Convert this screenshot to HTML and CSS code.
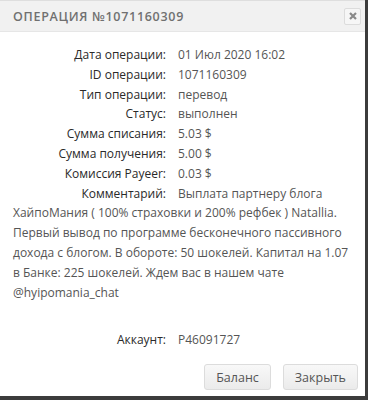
FILE: index.html
```html
<!DOCTYPE html>
<html lang="ru">
<head>
<meta charset="utf-8">
<link rel="stylesheet" href="styles.css">
</head>
<body>
<div class="dialog">
  <div class="head">
    <div class="title">Операция №1071160309</div>
    <div class="close">
      <svg width="8" height="8" viewBox="0 0 8 8"><path d="M1 1L7 7M7 1L1 7" stroke="#8a8a8a" stroke-width="2.2" stroke-linecap="butt"/></svg>
    </div>
  </div>
  <div class="body">
    <div class="rows">
      <div class="lbl">Дата операции:</div><div class="val">01 Июл 2020 16:02</div>
      <div class="lbl">ID операции:</div><div class="val">1071160309</div>
      <div class="lbl">Тип операции:</div><div class="val">перевод</div>
      <div class="lbl">Статус:</div><div class="val">выполнен</div>
      <div class="lbl">Сумма списания:</div><div class="val">5.03 $</div>
      <div class="lbl">Сумма получения:</div><div class="val">5.00 $</div>
      <div class="lbl">Комиссия Payeer:</div><div class="val">0.03 $</div>
      <div class="lbl">Комментарий:</div><div class="val">Выплата партнеру блога</div>
    </div>
    <p class="comment">ХайпоМания ( 100% страховки и 200% рефбек ) Natallia. Первый вывод по программе бесконечного пассивного дохода с блогом. В обороте: 50 шокелей. Капитал на 1.07 в Банке: 225 шокелей. Ждем вас в нашем чате @hyipomania_chat</p>
    <div class="rows account">
      <div class="lbl">Аккаунт:</div><div class="val">P46091727</div>
    </div>
  </div>
  <div class="foot">
    <button class="btn">Баланс</button>
    <button class="btn">Закрыть</button>
  </div>
</div>
</body>
</html>
```
FILE: styles.css
```css
html, body {
  margin: 0;
  padding: 0;
  background: #3c3c3c;
}
body {
  width: 368px;
  height: 400px;
  font-family: "Open Sans", "DejaVu Sans", sans-serif;
}
.dialog {
  width: 365px;
  height: 396px;
  background: #fff;
  display: flex;
  flex-direction: column;
}
.head {
  height: 32px;
  box-sizing: border-box;
  background: #f1f1f1;
  border-top: 1px solid #dedede;
  border-bottom: 1px solid #e6e6e6;
  display: flex;
  align-items: center;
  justify-content: space-between;
  padding: 0 4px 0 13px;
}
.title {
  text-transform: uppercase;
  font-size: 12.5px;
  font-weight: 600;
  color: #707070;
  letter-spacing: 0.7px;
}
.close {
  width: 17px;
  height: 17px;
  box-sizing: border-box;
  border: 1px solid #dcdcdc;
  border-radius: 2px;
  background: #f6f6f6;
  display: flex;
  align-items: center;
  justify-content: center;
}
.body {
  flex: 1;
  padding: 13px 10px 0 13px;
  font-size: 12px;
  line-height: 19.8px;
  color: #555;
}
.rows {
  display: grid;
  grid-template-columns: 153px 1fr;
  column-gap: 12px;
}
.lbl {
  text-align: right;
  color: #2a2a2a;
  font-weight: 500;
}
.comment {
  margin: 0;
}
.account {
  margin-top: 28px;
}
.foot {
  display: flex;
  justify-content: flex-end;
  gap: 12px;
  padding: 0 7px 6px 0;
}
.btn {
  font-family: "Open Sans", "DejaVu Sans", sans-serif;
  font-size: 12.5px;
  color: #555;
  height: 26px;
  padding: 0 11px;
  border: 1px solid #dcdcdc;
  border-radius: 3px;
  background: linear-gradient(#f8f8f8, #ebebeb);
}
```
